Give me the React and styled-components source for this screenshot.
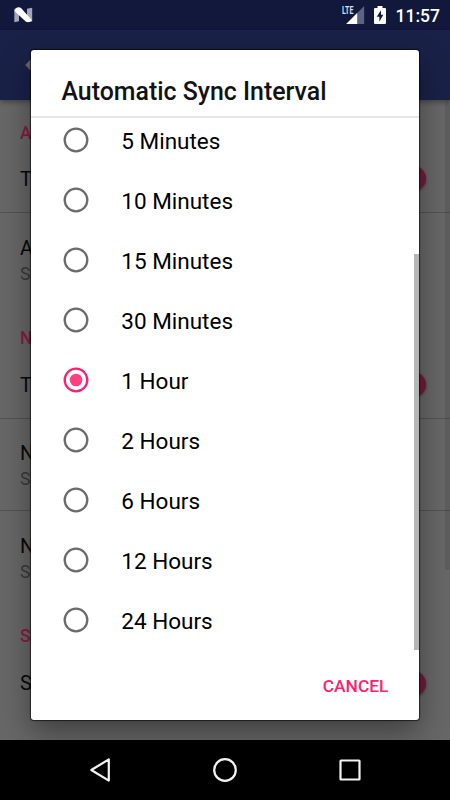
import styled, { createGlobalStyle } from 'styled-components';

// only the first letter of each setting shows beside the dialog
const sections = [
  {
    title: 'A',
    items: [
      { title: 'T', toggle: true, divider: true },
      { title: 'A', summary: 'S' },
    ],
  },
  {
    title: 'N',
    items: [
      { title: 'T', toggle: true, divider: true },
      { title: 'N', summary: 'S', divider: true },
      { title: 'N', summary: 'S' },
    ],
  },
  {
    title: 'S',
    items: [{ title: 'S', toggle: true }],
  },
];

const intervals = [
  '5 Minutes',
  '10 Minutes',
  '15 Minutes',
  '30 Minutes',
  '1 Hour',
  '2 Hours',
  '6 Hours',
  '12 Hours',
  '24 Hours',
];
const selected = '1 Hour';

const StatusBar = () => (
  <StStatusBar>
    <svg width="20" height="16" viewBox="0 0 20 16">
      <path d="M1.3 2 L6 0.8 V14.2 L1.3 15.2Z" fill="#a3a5b8" />
      <path d="M14 1.8 L19.2 0.8 V14.4 L14 15Z" fill="#a3a5b8" />
      <path d="M2.6 1.6 Q5.5 -0.6 8 1.1 L19 13.2 Q16.3 16 13 14.8 L1.4 4Z" fill="#fff" />
    </svg>
    <StStatusIcons>
      <svg width="23" height="20" viewBox="0 0 23 20">
        <path d="M22.2 1 V19 H4.2Z" fill="#5d6184" />
        <path d="M15.2 8 V19 H4.2Z" fill="#fff" />
        <StNetwork x="0" y="9" textLength="11.4" lengthAdjust="spacingAndGlyphs">
          LTE
        </StNetwork>
      </svg>
      <svg width="12" height="18" viewBox="0 0 12 18">
        <path d="M3.5 0 H8.5 V2 H11 Q12 2 12 3 V17 Q12 18 11 18 H1 Q0 18 0 17 V3 Q0 2 1 2 H3.5Z" fill="#fff" />
        <path d="M7 4.2 L2.7 10.8 H5.4 V15.8 L9.3 8.8 H7Z" fill="#12173c" />
      </svg>
      <StClock>11:57</StClock>
    </StStatusIcons>
  </StStatusBar>
);

const Settings = () => (
  <StSettings>
    <StList>
      {sections.map((section) => (
        <section key={section.title}>
          <StSectionTitle>{section.title}</StSectionTitle>
          {section.items.map((item, index) => (
            <StSetting key={index} $tall={!!item.summary} $divider={item.divider}>
              <div>
                <StSettingTitle>{item.title}</StSettingTitle>
                {item.summary && <StSummary>{item.summary}</StSummary>}
              </div>
              {item.toggle && <StToggle />}
            </StSetting>
          ))}
        </section>
      ))}
    </StList>
    <StPageScrollbar />
  </StSettings>
);

const Radio = ({ checked }) => (
  <StRadio viewBox="0 0 26 26" $checked={checked}>
    <circle cx="13" cy="13" r="11.3" />
    {checked && <StRadioDot cx="13" cy="13" r="6.3" />}
  </StRadio>
);

const IntervalDialog = () => (
  <StOverlay>
    <StDialog>
      <StDialogTitle>Automatic Sync Interval</StDialogTitle>
      <StOptions>
        {intervals.map((interval) => (
          <StOption key={interval}>
            <Radio checked={interval === selected} />
            <StLabel>{interval}</StLabel>
          </StOption>
        ))}
        <StScrollbar />
      </StOptions>
      <StActions>
        <StCancel>CANCEL</StCancel>
      </StActions>
    </StDialog>
  </StOverlay>
);

const App = () => {
  return (
    <StScreen>
      <GlobalStyle />
      <StatusBar />
      <StAppBar>
        <svg width="20" height="20" viewBox="0 0 20 20" fill="none" stroke="#676869" strokeWidth="2.6">
          <path d="M19 10 H3 M10 3 L3 10 L10 17" />
        </svg>
      </StAppBar>
      <Settings />
      <StNavBar>
        <svg width="24" height="26" viewBox="0 0 24 26">
          <path d="M20.8 2.4 V23.6 L3.3 13Z" />
        </svg>
        <svg width="26" height="26" viewBox="0 0 26 26">
          <circle cx="13" cy="13" r="10.8" />
        </svg>
        <svg width="24" height="24" viewBox="0 0 24 24">
          <rect x="2.5" y="2.5" width="19" height="19" rx="0.5" />
        </svg>
      </StNavBar>
      <IntervalDialog />
    </StScreen>
  );
};
export default App;

const GlobalStyle = createGlobalStyle`
  * {
    box-sizing: border-box;
  }

  body {
    margin: 0;
    font-family: Roboto, 'Liberation Sans', sans-serif;
  }

  p, h1, h2 {
    margin: 0;
  }
`;

const StScreen = styled.div`
  position: relative;
  display: flex;
  flex-direction: column;
  width: 450px;
  height: 800px;
  overflow: hidden;
  background: #676767;
`;

const StStatusBar = styled.header`
  display: flex;
  justify-content: space-between;
  align-items: center;
  height: 30px;
  padding: 0 10px 0 12.5px;
  background: #12173c;
`;

const StStatusIcons = styled.div`
  display: flex;
  align-items: center;
  gap: 9.5px;
`;

const StNetwork = styled.text`
  fill: #dedfe6;
  font-size: 10.5px;
  font-weight: 700;
`;

const StClock = styled.span`
  padding-top: 2px;
  color: #fff;
  font-size: 17.5px;
  font-weight: 500;
  line-height: 28px;
`;

const StAppBar = styled.div`
  z-index: 1;
  display: flex;
  align-items: center;
  height: 70px;
  padding-left: 24px;
  background: #1a2148;
  box-shadow: 0 2px 5px rgba(0, 0, 0, 0.35);
`;

const StSettings = styled.main`
  display: flex;
  height: 640px;
  overflow: hidden;
`;

const StList = styled.div`
  flex: 1;
  margin-right: -5px;
`;

const StPageScrollbar = styled.span`
  width: 5px;
  height: 470px;
  background: rgba(0, 0, 0, 0.09);
`;

const StSectionTitle = styled.h2`
  height: 46px;
  padding: 22px 20px 0;
  color: #8a1a43;
  font-size: 17.5px;
  font-weight: 500;
  line-height: 22px;

  section + section > & {
    padding-top: 21px;
  }
`;

const StSetting = styled.div`
  display: flex;
  justify-content: space-between;
  align-items: center;
  height: ${(props) => {
    if (!props.$tall) return '67px';
    return props.$divider ? '92px' : '93px';
  }};
  padding: ${(props) => (props.$tall ? '2px 24px 0 20px' : '0 24px 1px 20px')};
  border-bottom: ${(props) => (props.$divider ? '1px solid #525252' : 'none')};
`;

const StSettingTitle = styled.p`
  color: #090909;
  font-size: 20px;
  line-height: 26px;
`;

const StSummary = styled.p`
  color: #3b3b3b;
  font-size: 17.5px;
  line-height: 26px;
`;

const StToggle = styled.span`
  width: 25px;
  height: 25px;
  border-radius: 50%;
  background: #711b3b;
  box-shadow: 0 1px 3px rgba(0, 0, 0, 0.4);
`;

const StNavBar = styled.nav`
  z-index: 1;
  display: flex;
  justify-content: space-between;
  align-items: center;
  height: 60px;
  padding: 0 88px;
  background: #000;

  & svg {
    fill: none;
    stroke: #f2f2f2;
    stroke-width: 2.2;
    stroke-linejoin: round;
  }
`;

const StOverlay = styled.div`
  position: absolute;
  inset: 30px 0 60px;
  z-index: 2;
  display: flex;
  justify-content: center;
  padding: 20px 31px;
  overflow: hidden;
`;

const StDialog = styled.div`
  display: flex;
  flex-direction: column;
  width: 388px;
  height: 670px;
  border-radius: 3px;
  background: #fff;
  box-shadow: 0 0 1px 1px rgba(0, 0, 0, 0.6), 0 12px 30px rgba(0, 0, 0, 0.4);
`;

const StDialogTitle = styled.h1`
  height: 68px;
  padding: 26px 30.5px 0;
  border-bottom: 2px solid #e6e6e6;
  color: #121212;
  font-size: 24.9px;
  font-weight: 500;
  line-height: 32px;
`;

const StOptions = styled.ul`
  position: relative;
  display: flex;
  flex-direction: column;
  justify-content: flex-end;
  height: 532px;
  margin: 0;
  padding: 0;
  overflow: hidden;
  list-style: none;
`;

const StOption = styled.li`
  display: flex;
  flex-shrink: 0;
  align-items: center;
  gap: 32.3px;
  height: 60px;
  padding-left: 32px;
`;

const StLabel = styled.span`
  padding-top: 2px;
  color: #000;
  font-size: 22.5px;
  line-height: 28px;
`;

const StRadio = styled.svg`
  width: 26px;
  height: 26px;
  fill: none;
  stroke: ${(props) => (props.$checked ? '#ff1f70' : '#6b6b6b')};
  stroke-width: 2.3;
`;

const StRadioDot = styled.circle`
  fill: #ff4081;
  stroke: none;
`;

const StScrollbar = styled.span`
  position: absolute;
  right: 0;
  bottom: 0;
  width: 5px;
  height: 396px;
  background: #b5b7b6;
`;

const StActions = styled.div`
  display: flex;
  justify-content: flex-end;
  align-items: center;
  height: 70px;
  padding: 1px 30.5px 0 0;
`;

const StCancel = styled.button`
  padding: 0;
  border: none;
  background: none;
  color: #ff1f70;
  font-family: inherit;
  font-size: 17.4px;
  font-weight: 500;
`;
